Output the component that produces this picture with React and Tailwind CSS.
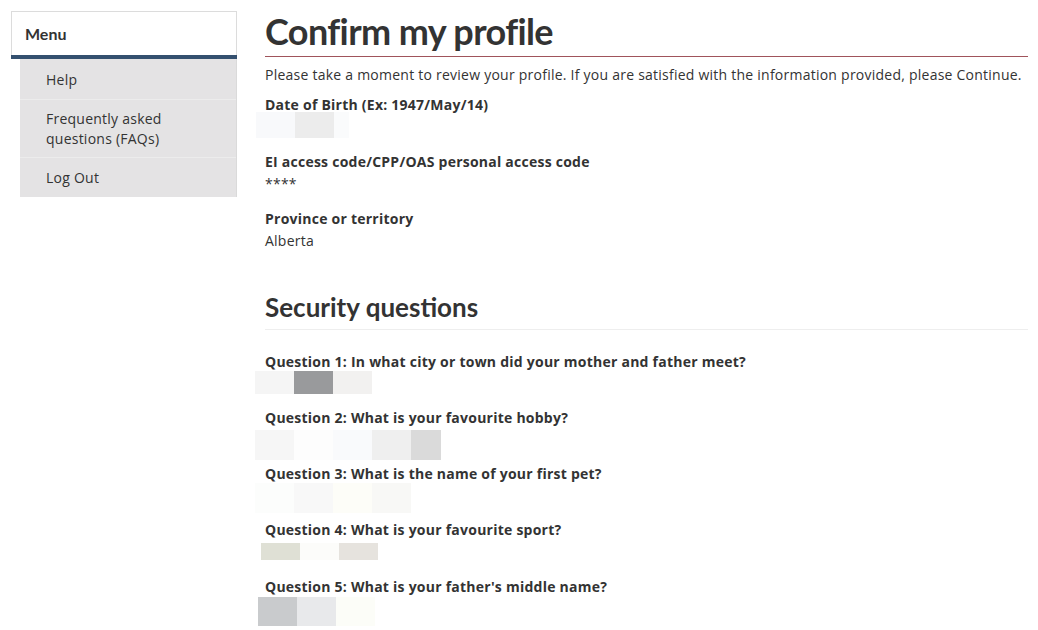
export default function App() {
  const body = { fontFamily: '"Open Sans", "Noto Sans", sans-serif' };
  const lato = { fontFamily: 'Lato, "Open Sans", sans-serif' };

  const Blocks = ({ colors, h, ml, mt }) => (
    <div className={`flex ${ml} ${mt}`}>
      {colors.map((c, i) => (
        <div key={i} className={`w-[39px] ${h}`} style={{ backgroundColor: c }} />
      ))}
    </div>
  );

  const Label = ({ children, cls }) => (
    <div className={`text-[14px] leading-[20px] font-bold text-[#333] tracking-[0.24px] ${cls}`}>{children}</div>
  );

  return (
    <div className="w-[1038px] h-[630px] bg-white flex overflow-hidden text-[#333]" style={body}>
      {/* Sidebar */}
      <div className="ml-[11px] mt-[11px] w-[226px] shrink-0">
        <div className="h-[44px] border border-b-0 border-[#dcdcdc] bg-white flex items-center pl-[13px]">
          <span className="text-[16px] font-bold text-[#333]" style={lato}>Menu</span>
        </div>
        <div className="h-[4px] bg-[#34506f]" />
        <div className="ml-[9px] bg-[#e4e3e4] border-r border-[#dadada] tracking-[0.24px]">
          <div className="h-[41px] flex items-center pl-[26px] pt-[1px] text-[14px] border-b border-[#ececec]">Help</div>
          <div className="h-[58px] flex items-center pl-[26px] text-[14px] leading-[20px] border-b border-[#ececec]">
            <span>Frequently asked<br />questions (FAQs)</span>
          </div>
          <div className="h-[39px] flex items-center pl-[26px] text-[14px]">Log Out</div>
        </div>
      </div>

      {/* Main */}
      <div className="ml-[28px] w-[763px] pt-[8px]">
        <h1 className="text-[36px] leading-[46px] font-bold tracking-[-0.6px] text-[#333] pb-[2px] border-b border-[#a0545b]" style={lato}>
          Confirm my profile
        </h1>
        <p className="mt-[8px] text-[14px] leading-[20px] tracking-[0.24px]">
          Please take a moment to review your profile. If you are satisfied with the information provided, please Continue.
        </p>

        <Label cls="mt-[10px]">Date of Birth (Ex: 1947/May/14)</Label>
        <div className="flex -ml-[9px] -mt-[3px]">
          <div className="w-[39px] h-[26px] bg-[#f8f9fb]" />
          <div className="w-[39px] h-[26px] bg-[#ececec]" />
          <div className="w-[15px] h-[26px] bg-[#fafbfc]" />
        </div>

        <Label cls="mt-[14px]">EI access code/CPP/OAS personal access code</Label>
        <div className="mt-[2px] text-[14px] leading-[20px] tracking-[0.24px]">****</div>

        <Label cls="mt-[15px]">Province or territory</Label>
        <div className="mt-[2px] text-[14px] leading-[20px] tracking-[0.24px]">Alberta</div>

        <h2 className="mt-[40px] text-[26px] leading-[32px] font-bold text-[#333] pb-[6px] border-b border-[#eeeeee]" style={lato}>
          Security questions
        </h2>

        <Label cls="mt-[22px]">Question 1: In what city or town did your mother and father meet?</Label>
        <Blocks colors={["#f5f5f5", "#999a9c", "#f2f1f0"]} h="h-[23px]" ml="-ml-[10px]" mt="-mt-[1px]" />

        <Label cls="mt-[14px]">Question 2: What is your favourite hobby?</Label>
        <div className="flex -ml-[10px] mt-[2px]">
          <div className="w-[39px] h-[30px] bg-[#f6f6f6]" />
          <div className="w-[39px] h-[30px] bg-[#fdfdfd]" />
          <div className="w-[39px] h-[30px] bg-[#f9fafc]" />
          <div className="w-[39px] h-[30px] bg-[#efefef]" />
          <div className="w-[30px] h-[30px] bg-[#dadada]" />
        </div>

        <Label cls="mt-[4px]">Question 3: What is the name of your first pet?</Label>
        <Blocks colors={["#fcfdfc", "#f8f8f8", "#fdfdf8", "#f8f8f6"]} h="h-[30px]" ml="-ml-[10px]" mt="-mt-[1px]" />

        <Label cls="mt-[7px]">Question 4: What is your favourite sport?</Label>
        <Blocks colors={["#dfe0d5", "#fcfcfa", "#e6e3de"]} h="h-[17px]" ml="-ml-[4px]" mt="mt-[3px]" />

        <Label cls="mt-[17px]">Question 5: What is your father's middle name?</Label>
        <Blocks colors={["#c9cbcd", "#e8e9eb", "#fcfdf8"]} h="h-[29px]" ml="-ml-[7px]" mt="mt-0" />
      </div>
    </div>
  );
}
